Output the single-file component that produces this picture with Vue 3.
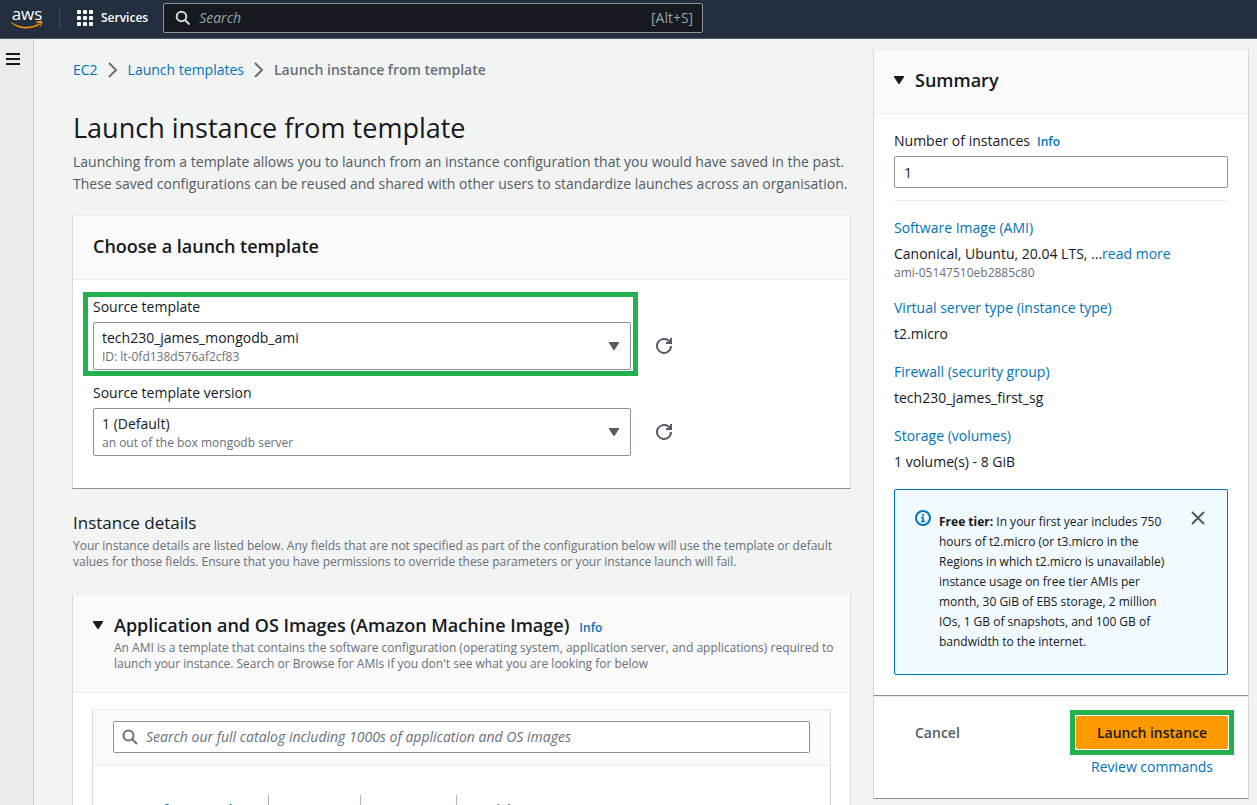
<script setup>
import { ref } from 'vue'

const search = ref('')
const catalogSearch = ref('')
const count = ref('1')

const fields = [
  { id: 'source-template', label: 'Source template', value: 'tech230_james_mongodb_ami', note: 'ID: lt-0fd138d576af2cf83', marked: true },
  { id: 'source-version', label: 'Source template version', value: '1 (Default)', note: 'an out of the box mongodb server', marked: false },
]
const tabs = ['AMI from catalog', 'Recents', 'My AMIs', 'Quick Start']
const details = [
  { title: 'Virtual server type (instance type)', value: 't2.micro' },
  { title: 'Firewall (security group)', value: 'tech230_james_first_sg' },
  { title: 'Storage (volumes)', value: '1 volume(s) - 8 GiB' },
]
</script>

<template>
  <div class="page">
    <header class="topbar">
      <a href="#" class="logo" aria-label="AWS home">
        <span class="logo-text">aws</span>
        <svg class="swoosh" width="32" height="8" viewBox="0 0 32 8">
          <path d="M.4 1.2C9 7 20 7.300 28 2.600c.9-.5 1.500.4.700 1C21 9 7.500 9 .2 1.800-.2 1.300 0 .9.400 1.200z" fill="#f90" />
          <path d="M25.300.9c1.500-1 5.300-1.200 5.800-.5.500.8-.4 4.300-1.900 5.600-.3.200-.5.100-.4-.2.400-1 1.200-3.200.8-3.800-.4-.5-2.700-.3-3.900-.1-.6.100-.8-.6-.4-1z" fill="#f90" />
        </svg>
      </a>
      <span class="divider"></span>
      <button class="services" type="button">
        <svg width="16" height="16" viewBox="0 0 16 16" fill="#fff">
          <template v-for="r in 3" :key="r">
            <rect v-for="c in 3" :key="c" :x="(c - 1) * 6" :y="(r - 1) * 6" width="4" height="4" rx="1" />
          </template>
        </svg>
        <span>Services</span>
      </button>
      <div class="top-search">
        <svg width="16" height="16" viewBox="0 0 16 16" fill="none" stroke="#d5dbdb" stroke-width="2">
          <circle cx="6.500" cy="6.500" r="4.800" /><path d="M10 10l4.500 4.500" />
        </svg>
        <input v-model="search" type="text" placeholder="Search" aria-label="Search" />
        <span class="shortcut">[Alt+S]</span>
      </div>
    </header>

    <div class="body">
      <nav class="rail">
        <button type="button" aria-label="Open navigation">
          <svg width="14" height="12" viewBox="0 0 14 12" fill="#16191f">
            <rect width="14" height="2" /><rect y="5" width="14" height="2" /><rect y="10" width="14" height="2" />
          </svg>
        </button>
      </nav>

      <main class="main">
        <nav class="crumbs" aria-label="Breadcrumb">
          <a href="#">EC2</a>
          <svg width="10" height="16" viewBox="0 0 10 16" fill="none" stroke="#687078" stroke-width="2"><path d="M1 1l7 7-7 7" /></svg>
          <a href="#">Launch templates</a>
          <svg width="10" height="16" viewBox="0 0 10 16" fill="none" stroke="#687078" stroke-width="2"><path d="M1 1l7 7-7 7" /></svg>
          <span>Launch instance from template</span>
        </nav>

        <h1>Launch instance from template</h1>
        <p class="intro">
          Launching from a template allows you to launch from an instance configuration that you would have saved in the past.<br />
          These saved configurations can be reused and shared with other users to standardize launches across an organisation.
        </p>

        <section class="card">
          <div class="card-head"><h2>Choose a launch template</h2></div>
          <div class="card-body">
            <div v-for="f in fields" :key="f.id" class="field-row">
              <div class="field" :class="{ marked: f.marked }">
                <label :for="f.id">{{ f.label }}</label>
                <div class="select-box">
                  <select :id="f.id"><option>{{ f.value }}</option></select>
                  <span class="note">{{ f.note }}</span>
                  <svg class="caret" width="10" height="8" viewBox="0 0 10 8" fill="#545b64"><path d="M0 0h10v1L5.500 8h-1L0 1z" /></svg>
                </div>
              </div>
              <button class="refresh" type="button" :aria-label="'Refresh ' + f.label">
                <svg width="16" height="16" viewBox="0 0 16 16" fill="none" stroke="#545b64" stroke-width="2">
                  <path d="M15 8a7 7 0 1 1-2.500-5.400L15 5" /><path d="M15 0v5h-5" />
                </svg>
              </button>
            </div>
          </div>
        </section>

        <h3>Instance details</h3>
        <p class="small">
          Your instance details are listed below. Any fields that are not specified as part of the configuration below will use the template or default<br />
          values for those fields. Ensure that you have permissions to override these parameters or your instance launch will fail.
        </p>

        <section class="card ami">
          <div class="ami-head">
            <svg class="tri" width="10" height="8" viewBox="0 0 10 8" fill="#16191f"><path d="M0 0h10v1L5.500 8h-1L0 1z" /></svg>
            <div>
              <div class="ami-title">
                <h2>Application and OS Images (Amazon Machine Image)</h2>
                <a href="#" class="info">Info</a>
              </div>
              <p class="small">
                An AMI is a template that contains the software configuration (operating system, application server, and applications) required to<br />
                launch your instance. Search or Browse for AMIs if you don't see what you are looking for below
              </p>
            </div>
          </div>
          <div class="ami-body">
            <div class="catalog">
              <div class="catalog-head">
                <div class="catalog-search">
                  <svg width="16" height="16" viewBox="0 0 16 16" fill="none" stroke="#687078" stroke-width="2">
                    <circle cx="6.500" cy="6.500" r="5" /><path d="M10 10l5 5" />
                  </svg>
                  <input v-model="catalogSearch" type="text" aria-label="Search catalog" placeholder="Search our full catalog including 1000s of application and OS images" />
                </div>
              </div>
              <div class="tabs" role="tablist">
                <button v-for="(t, i) in tabs" :key="t" type="button" role="tab" :class="{ active: i === 0 }">{{ t }}</button>
              </div>
            </div>
          </div>
        </section>
      </main>

      <aside class="side">
        <section class="card">
          <div class="card-head summary-head">
            <svg width="10" height="8" viewBox="0 0 10 8" fill="#16191f"><path d="M0 0h10v1L5.500 8h-1L0 1z" /></svg>
            <h2>Summary</h2>
          </div>
          <div class="summary-body">
            <div class="count-label">
              <label for="count">Number of instances</label>
              <a href="#" class="info">Info</a>
            </div>
            <input id="count" v-model="count" class="count" type="text" />
            <hr />
            <div class="detail">
              <a href="#">Software Image (AMI)</a>
              <p>Canonical, Ubuntu, 20.04 LTS, ...<a href="#">read more</a></p>
              <p class="small">ami-05147510eb2885c80</p>
            </div>
            <div v-for="d in details" :key="d.title" class="detail">
              <a href="#">{{ d.title }}</a>
              <p>{{ d.value }}</p>
            </div>
            <div class="alert">
              <svg width="16" height="16" viewBox="0 0 16 16" fill="none" stroke="#0073bb" stroke-width="2">
                <circle cx="8" cy="8" r="7" /><path d="M8 4v2M6 7.500h2V12M6 11.500h4" stroke-width="1.600" />
              </svg>
              <p>
                <b>Free tier:</b> In your first year includes 750<br />hours of t2.micro (or t3.micro in the<br />Regions in which t2.micro is unavailable)<br />instance usage on free tier AMIs per<br />month, 30 GiB of EBS storage, 2 million<br />IOs, 1 GB of snapshots, and 100 GB of<br />bandwidth to the internet.
              </p>
              <button type="button" aria-label="Dismiss">
                <svg width="14" height="14" viewBox="0 0 14 14" fill="none" stroke="#545b64" stroke-width="2"><path d="M1 1l12 12M13 1L1 13" /></svg>
              </button>
            </div>
          </div>
        </section>
        <section class="card actions">
          <button class="cancel" type="button">Cancel</button>
          <div class="launch-col">
            <div class="launch-mark"><button class="launch" type="button">Launch instance</button></div>
            <a href="#">Review commands</a>
          </div>
        </section>
      </aside>
    </div>
  </div>
</template>

<style>
body { margin: 0; }
</style>

<style scoped>
* { box-sizing: border-box; }
.page {
  height: 100vh;
  overflow: hidden;
  display: flex;
  flex-direction: column;
  background: #f2f3f3;
  color: #16191f;
  font-family: "Open Sans", "Noto Sans", sans-serif;
  font-size: 14px;
  line-height: 22px;
}
h1, h2, h3, p { margin: 0; }
a { color: #0073bb; text-decoration: none; }
button, input, select { font: inherit; color: inherit; }
button { border: 0; background: none; padding: 0; cursor: pointer; }
svg { display: block; flex: none; }

.topbar {
  flex: none;
  height: 39px;
  display: flex;
  align-items: center;
  padding: 0 11px 2px;
  background: #232f3e;
  border-bottom: 1px solid #545b64;
}
.logo { width: 32px; display: flex; flex-direction: column; align-items: center; }
.logo-text { color: #fff; font-size: 17px; font-weight: 400; line-height: 14px; }
.divider { width: 1px; height: 22px; margin: 0 17px 0 16px; background: #414d5c; }
.services { display: flex; align-items: center; gap: 8px; color: #fff; font-size: 12px; font-weight: 600; }
.top-search {
  width: 540px;
  height: 30px;
  margin-left: 15px;
  padding: 0 9px 0 11px;
  display: flex;
  align-items: center;
  gap: 8px;
  background: #16191f;
  border: 1px solid #879596;
  border-radius: 2px;
  color: #95a5a6;
}
.top-search input { flex: 1; min-width: 0; border: 0; outline: 0; background: none; padding: 0; }
input::placeholder { color: inherit; opacity: 1; font-style: italic; }

.body { flex: 1; min-height: 0; display: grid; grid-template-columns: 34px minmax(0, 1fr) 376px; padding-right: 8px; }
.rail { background: #eaeded; border-right: 1px solid #c5cccc; padding: 14px 6px; }
.rail button { display: block; }
.main { padding: 20px 22px 0 38px; overflow: hidden; }
.crumbs, h1, .intro, h3, .main > .small { padding-left: 1px; }
.crumbs { display: flex; align-items: center; gap: 10px; }
.crumbs span { color: #687078; font-weight: 600; }
h1 { margin-top: 30px; font-size: 27px; line-height: 34px; font-weight: 400; }
.intro { margin: 6px 0 20px; color: #545b64; white-space: nowrap; }
h2 { font-size: 18px; line-height: 22px; font-weight: 600; }
h3 { margin-top: 23px; font-size: 17px; line-height: 22px; font-weight: 400; }
.small { color: #687078; font-size: 12px; line-height: 16px; white-space: nowrap; }
h3 + .small { margin-top: 4px; }

.card {
  background: #fff;
  border: 1px solid #d5dbdb;
  border-top-color: #eaeded;
  border-bottom-color: #879596;
}
.card-head { height: 64px; display: flex; align-items: center; padding: 0 20px 4px; background: #fafafa; border-bottom: 1px solid #eaeded; }
.card-body { padding: 16px 20px 32px; }
.field-row { display: flex; align-items: flex-end; gap: 24px; }
.field-row + .field-row { margin-top: 12px; }
.field { width: 538px; position: relative; }
.field label { display: block; margin-bottom: 4px; }
.marked::after { content: ""; position: absolute; inset: -4px -7px -6px -10px; border: 5px solid #22b14c; pointer-events: none; }
.select-box { display: grid; }
.select-box > * { grid-area: 1 / 1; }
.select-box select {
  height: 48px;
  padding: 0 30px 16px 8px;
  appearance: none;
  background: #fff;
  border: 1px solid #879596;
  border-radius: 2px;
}
.note { align-self: end; padding: 0 9px 5px; font-size: 12px; line-height: 16px; color: #687078; pointer-events: none; }
.caret { place-self: center end; margin-right: 12px; pointer-events: none; }
.refresh { height: 48px; padding: 0 1px; }

.ami { margin-top: 24px; }
.ami-head { display: flex; gap: 11px; padding: 19px 20px 20px; background: #fafafa; border-bottom: 1px solid #eaeded; }
.tri { margin-top: 7px; }
.ami-title { display: flex; align-items: baseline; height: 22px; gap: 10px; margin-bottom: 4px; }
.info { font-size: 12px; font-weight: 600; }
.ami-body { padding: 16px 19px; }
.catalog { border: 1px solid #d5dbdb; border-top-color: #eaeded; }
.catalog-head { padding: 11px 20px 12px; background: #fafafa; border-bottom: 1px solid #eaeded; }
.catalog-search { height: 32px; display: flex; align-items: center; gap: 8px; padding: 0 8px; background: #fff; border: 1px solid #879596; border-radius: 2px; color: #687078; }
.catalog-search input { flex: 1; min-width: 0; border: 0; outline: 0; padding: 0; background: none; }
.tabs { display: flex; padding: 29px 21px 20px; }
.tabs button { padding: 4px 19px 6px; font-weight: 600; color: #545b64; border-right: 1px solid #aab7b8; }
.tabs button:last-child { border-right: 0; }
.tabs .active { color: #0073bb; }

.side { padding-top: 10px; }
.summary-body { padding: 16px 20px 20px; }
.summary-head { gap: 11px; }
.count-label { display: flex; align-items: baseline; height: 22px; gap: 7px; margin-bottom: 4px; }
.count { display: block; width: 100%; height: 32px; padding: 0 9px; border: 1px solid #879596; border-radius: 2px; background: #fff; }
hr { margin: 12px 0 16px; border: 0; border-top: 1px solid #eaeded; }
.detail { margin-bottom: 16px; }
.detail > a { display: block; margin-bottom: 4px; }
.alert { display: flex; gap: 8px; padding: 20px 22px 22px 20px; background: #f1faff; border: 1px solid #0073bb; border-radius: 2px; }
.alert p { flex: 1; padding-top: 2px; font-size: 12px; line-height: 20px; white-space: nowrap; }
.alert button { align-self: flex-start; padding-top: 1px; }
.actions { display: flex; align-items: flex-start; justify-content: space-between; padding: 13px 14px 20px 41px; }
.cancel { color: #545b64; font-weight: 600; line-height: 45px; }
.launch-col { display: flex; flex-direction: column; align-items: center; }
.launch-mark { border: 5px solid #22b14c; padding: 1px; }
.launch { display: block; width: 152px; height: 33px; background: #f90; border-radius: 2px; font-weight: 600; }
.launch-col a { margin-top: 1px; }
</style>
